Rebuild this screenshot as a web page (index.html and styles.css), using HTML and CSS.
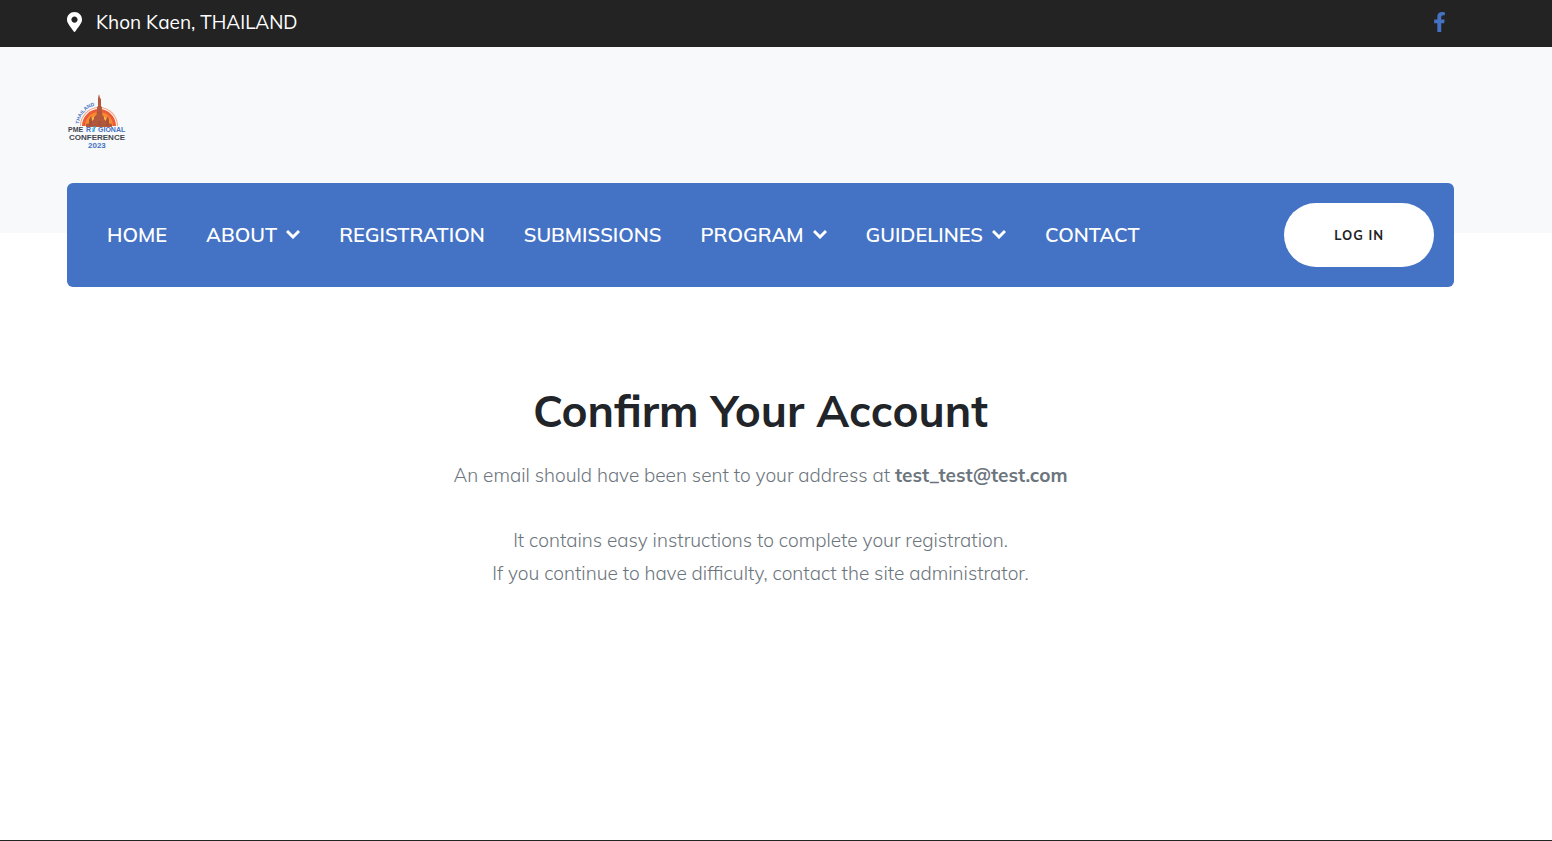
FILE: index.html
```html
<!DOCTYPE html>
<html lang="en">
<head>
    <meta charset="UTF-8">
    <meta name="viewport" content="width=device-width, initial-scale=1.0">
    <title>Confirm Your Account - PME Regional Conference 2023</title>
    <link rel="stylesheet" href="styles.css">
</head>
<body>
    <div class="top-bar">
        <div class="container top-bar-inner">
            <div class="location">
                <svg class="icon-pin" viewBox="0 0 384 512" aria-hidden="true">
                    <path fill="currentColor" d="M172 502C27 291 0 270 0 192 0 86 86 0 192 0s192 86 192 192c0 78-27 99-172 310-10 13-30 13-40 0zm20-230c44 0 80-36 80-80s-36-80-80-80-80 36-80 80 36 80 80 80z"/>
                </svg>
                <span>Khon Kaen, THAILAND</span>
            </div>
            <a class="social" href="#" aria-label="Facebook">
                <svg class="icon-facebook" viewBox="0 0 320 512" aria-hidden="true">
                    <path fill="currentColor" d="M279 288l14-93h-89v-60c0-25 12-50 52-50h41V7s-37-7-72-7c-73 0-121 44-121 125v70H23v93h81v224h100V288z"/>
                </svg>
            </a>
        </div>
    </div>

    <header class="header">
        <div class="container">
            <a class="logo" href="#" aria-label="PME Regional Conference 2023">
                <svg viewBox="0 0 60 60" aria-hidden="true">
                    <defs>
                        <path id="arc" d="M12 31A21 21 0 0 1 32 12"/>
                    </defs>
                    <g transform="translate(2 -1)">
                        <path fill="#f4a078" d="M11 34a19 19 0 0 1 38 0z"/>
                        <path fill="#fff" d="M12 34a18 18 0 0 1 36 0z"/>
                        <path fill="#ee5b38" d="M13 34a17 17 0 0 1 34 0z"/>
                        <path fill="#f68b32" d="M16 34a14 14 0 0 1 28 0z"/>
                        <path fill="#fcb44c" d="M20 34a10 11 0 0 1 20 0z"/>
                    </g>
                    <path fill="#b5593c" d="M32 1l1 4 1 1v7l1 2v6l2 3v2l3 3v1l5 1v3H19v-3l5-1v-1l3-3v-2l3-3v-6l1-2V6l0-1z"/>
                    <path stroke="#9c4c38" stroke-width=".5" fill="none" d="M31 9h3M30 14h5M29 20h7M27 25h10M24 29h16M20 32h24"/>
                    <path fill="#a8523a" d="M24 23l1 4v6h-3v-6zM41 23l1 4v6h-3v-6zM31 28h3v5h-3z"/>
                    <text class="logo-thai"><textPath href="#arc">THAILAND</textPath></text>
                    <text class="logo-line logo-top logo-dark" x="1" y="39">PME</text>
                    <text class="logo-line logo-top logo-blue" x="19" y="39">R</text>
                    <path stroke="#35a2d4" stroke-width="1" d="M26 34h3M25 36h3M25 38h3M28 34l-2 5"/>
                    <text class="logo-line logo-top logo-blue" x="31" y="39">GIONAL</text>
                    <text class="logo-line logo-dark" x="2" y="47">CONFERENCE</text>
                    <text class="logo-line logo-blue" x="21" y="55">2023</text>
                </svg>
            </a>
            <nav class="navbar">
                <ul class="menu">
                    <li><a href="#">HOME</a></li>
                    <li><a href="#">ABOUT <svg class="chevron" viewBox="0 0 14 10" aria-hidden="true"><path d="M1 2l6 6 6-6"/></svg></a></li>
                    <li><a href="#">REGISTRATION</a></li>
                    <li><a href="#">SUBMISSIONS</a></li>
                    <li><a href="#">PROGRAM <svg class="chevron" viewBox="0 0 14 10" aria-hidden="true"><path d="M1 2l6 6 6-6"/></svg></a></li>
                    <li><a href="#">GUIDELINES <svg class="chevron" viewBox="0 0 14 10" aria-hidden="true"><path d="M1 2l6 6 6-6"/></svg></a></li>
                    <li><a href="#">CONTACT</a></li>
                </ul>
                <a class="login-btn" href="#">LOG IN</a>
            </nav>
        </div>
    </header>

    <main class="container confirm">
        <h1>Confirm Your Account</h1>
        <p>An email should have been sent to your address at <strong>test_test@test.com</strong></p>
        <p>It contains easy instructions to complete your registration.<br>
        If you continue to have difficulty, contact the site administrator.</p>
    </main>

    <footer class="footer"></footer>
</body>
</html>
```

FILE: styles.css
```css
* {
    box-sizing: border-box;
}
body {
    margin: 0;
    min-height: 100vh;
    display: flex;
    flex-direction: column;
    font-family: 'Mulish', 'Open Sans', sans-serif;
    font-size: 19px;
    line-height: 33px;
    color: #6c757d;
    background-color: #fff;
}
a {
    color: inherit;
    text-decoration: none;
}
.container {
    width: 100%;
    padding: 0 98px 0 67px;
}
.top-bar {
    background-color: #232323;
    color: #fff;
}
.top-bar-inner {
    height: 47px;
    padding-bottom: 3px;
    display: flex;
    align-items: center;
    justify-content: space-between;
}
.location {
    display: flex;
    align-items: center;
    gap: 14px;
}
.icon-pin {
    width: 15px;
    height: 20px;
}
.social {
    display: flex;
    padding-right: 8px;
    color: #4472c4;
}
.icon-facebook {
    width: 13px;
    height: 20px;
}
.header {
    background: linear-gradient(#f8f9fb, #f8f9fb) no-repeat;
    background-size: 100% 186px;
}
.logo {
    display: block;
    width: 60px;
    padding-top: 46px;
    margin-bottom: 30px;
}
.logo svg {
    display: block;
    width: 60px;
    height: 60px;
}
.logo-line {
    font-family: 'Liberation Sans', sans-serif;
    font-size: 8px;
    font-weight: bold;
}
.logo-top {
    font-size: 7px;
}
.logo-dark {
    fill: #414750;
}
.logo-blue {
    fill: #4472c4;
}
.logo-thai {
    font-family: 'Liberation Sans', sans-serif;
    font-size: 5px;
    font-weight: bold;
    fill: #4472c4;
}
.navbar {
    display: flex;
    align-items: center;
    justify-content: space-between;
    padding: 20px 20px 20px 40px;
    background-color: #4472c4;
    border-radius: 6px;
}
.menu {
    display: flex;
    gap: 39px;
    margin: 0;
    padding: 0 0 2px;
    list-style: none;
}
.menu a {
    display: flex;
    align-items: center;
    gap: 9px;
    color: #fff;
    font-size: 20px;
    font-weight: 650;
}
.chevron {
    width: 14px;
    height: 10px;
    fill: none;
    stroke: currentColor;
    stroke-width: 3;
}
.login-btn {
    padding: 16px 50px;
    line-height: 32px;
    border-radius: 32px;
    background-color: #fff;
    color: #232323;
    font-size: 13px;
    font-weight: 700;
    letter-spacing: 1px;
}
.confirm {
    flex: 1;
    padding-top: 95px;
    text-align: center;
}
.confirm h1 {
    margin: 0 0 19px;
    font-size: 44px;
    font-weight: 700;
    line-height: 58px;
    color: #212529;
}
.confirm p {
    margin: 0 0 32px;
    font-weight: 350;
}
.confirm strong {
    font-weight: 700;
}
.footer {
    height: 1px;
    background-color: #232323;
}
```
